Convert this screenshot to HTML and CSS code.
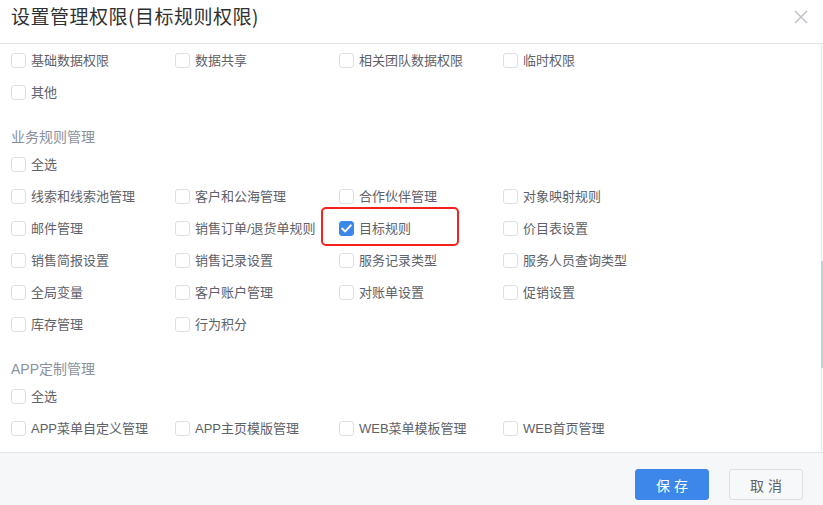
FILE: index.html
```html
<!DOCTYPE html>
<html lang="zh-CN">
<head>
<meta charset="utf-8">
<title>设置管理权限</title>
<link rel="stylesheet" href="styles.css">
</head>
<body>
<div class="dialog">
  <div class="header">
    <div class="title">设置管理权限(目标规则权限)</div>
    <svg class="close" width="14" height="14" viewBox="0 0 14 14"><path d="M1 1L13 13M13 1L1 13" stroke="#c0c4cc" stroke-width="1.6" fill="none"/></svg>
  </div>
  <div class="body">
    <div class="content">
      <div class="grid">
        <label class="item"><span class="box"></span>基础数据权限</label>
        <label class="item"><span class="box"></span>数据共享</label>
        <label class="item"><span class="box"></span>相关团队数据权限</label>
        <label class="item"><span class="box"></span>临时权限</label>
        <label class="item"><span class="box"></span>其他</label>
      </div>
      <div class="section">业务规则管理</div>
      <div class="grid">
        <label class="item"><span class="box"></span>全选</label>
      </div>
      <div class="grid">
        <label class="item"><span class="box"></span>线索和线索池管理</label>
        <label class="item"><span class="box"></span>客户和公海管理</label>
        <label class="item"><span class="box"></span>合作伙伴管理</label>
        <label class="item"><span class="box"></span>对象映射规则</label>
        <label class="item"><span class="box"></span>邮件管理</label>
        <label class="item"><span class="box"></span>销售订单/退货单规则</label>
        <label class="item marked"><span class="box checked"><svg width="11" height="9" viewBox="0 0 11 9"><path d="M1.2 4.6L4.2 7.4L9.8 1.4" stroke="#fff" stroke-width="2" fill="none" stroke-linecap="round" stroke-linejoin="round"/></svg></span>目标规则<span class="highlight"></span></label>
        <label class="item"><span class="box"></span>价目表设置</label>
        <label class="item"><span class="box"></span>销售简报设置</label>
        <label class="item"><span class="box"></span>销售记录设置</label>
        <label class="item"><span class="box"></span>服务记录类型</label>
        <label class="item"><span class="box"></span>服务人员查询类型</label>
        <label class="item"><span class="box"></span>全局变量</label>
        <label class="item"><span class="box"></span>客户账户管理</label>
        <label class="item"><span class="box"></span>对账单设置</label>
        <label class="item"><span class="box"></span>促销设置</label>
        <label class="item"><span class="box"></span>库存管理</label>
        <label class="item"><span class="box"></span>行为积分</label>
      </div>
      <div class="section">APP定制管理</div>
      <div class="grid">
        <label class="item"><span class="box"></span>全选</label>
      </div>
      <div class="grid">
        <label class="item"><span class="box"></span>APP菜单自定义管理</label>
        <label class="item"><span class="box"></span>APP主页模版管理</label>
        <label class="item"><span class="box"></span>WEB菜单模板管理</label>
        <label class="item"><span class="box"></span>WEB首页管理</label>
      </div>
    </div>
    <div class="track"><div class="thumb"></div></div>
  </div>
  <div class="footer">
    <button class="btn primary">保存</button>
    <button class="btn">取消</button>
  </div>
</div>
</body>
</html>
```
FILE: styles.css
```css
html, body {
  margin: 0;
  padding: 0;
  background: #fff;
}
body {
  font-family: "Liberation Sans", "Noto Sans CJK SC", sans-serif;
  width: 823px;
  height: 505px;
  overflow: hidden;
}
.dialog {
  display: flex;
  flex-direction: column;
  height: 505px;
}
.header {
  height: 43px;
  border-bottom: 1px solid #e4e4e4;
  display: flex;
  align-items: center;
  justify-content: space-between;
  padding: 0 15px 0 11px;
  flex: none;
}
.title {
  font-family: "Noto Sans CJK SC", sans-serif;
  font-size: 19px;
  letter-spacing: 0.5px;
  color: #303133;
  line-height: 26px;
  margin-top: -11px;
}
.close {
  margin-top: -9px;
}
.body {
  flex: 1;
  display: flex;
  min-height: 0;
}
.content {
  flex: 1;
  padding-left: 11px;
}
.grid {
  display: grid;
  grid-template-columns: repeat(4, 164px);
}
.item {
  height: 32px;
  box-sizing: border-box;
  padding-bottom: 2px;
  display: flex;
  align-items: center;
  font-size: 13px;
  color: #5e6168;
  position: relative;
}
.box {
  width: 15px;
  height: 15px;
  box-sizing: border-box;
  border: 1px solid #dcdfe6;
  border-radius: 3px;
  margin-right: 5px;
  margin-top: 2px;
  background: #fff;
  display: flex;
  align-items: center;
  justify-content: center;
  flex: none;
}
.box.checked {
  background: #3a89e8;
  border-color: #3a89e8;
}
.highlight {
  position: absolute;
  left: -18px;
  top: -5px;
  width: 138px;
  height: 39px;
  box-sizing: border-box;
  border: 2.5px solid #f5221b;
  border-radius: 5px;
}
.section {
  font-size: 14px;
  color: #8a919e;
  line-height: 22px;
  padding-top: 18px;
}
.track {
  width: 2px;
  box-shadow: inset 1px 0 0 #e6e8ec;
  position: relative;
  flex: none;
}
.thumb {
  position: absolute;
  left: 0;
  top: 217px;
  width: 2px;
  height: 107px;
  background: #c3ccd9;
}
.footer {
  border-top: 1px solid #e1e4e9;
  background: #f6f7f9;
  display: flex;
  align-items: flex-start;
  justify-content: flex-end;
  padding: 16px 20px 0 0;
  gap: 20px;
  box-sizing: border-box;
  flex: none;
  height: 53px;
}
.btn {
  width: 74px;
  height: 31px;
  border-radius: 3px;
  border: 1px solid #dcdfe6;
  background: #f7f8fa;
  color: #606266;
  font-family: "Noto Sans CJK SC", sans-serif;
  font-size: 14px;
  letter-spacing: 4px;
  text-indent: 4px;
  padding: 0;
}
.btn.primary {
  background: #3c87e9;
  border-color: #3c87e9;
  color: #fff;
}
```
